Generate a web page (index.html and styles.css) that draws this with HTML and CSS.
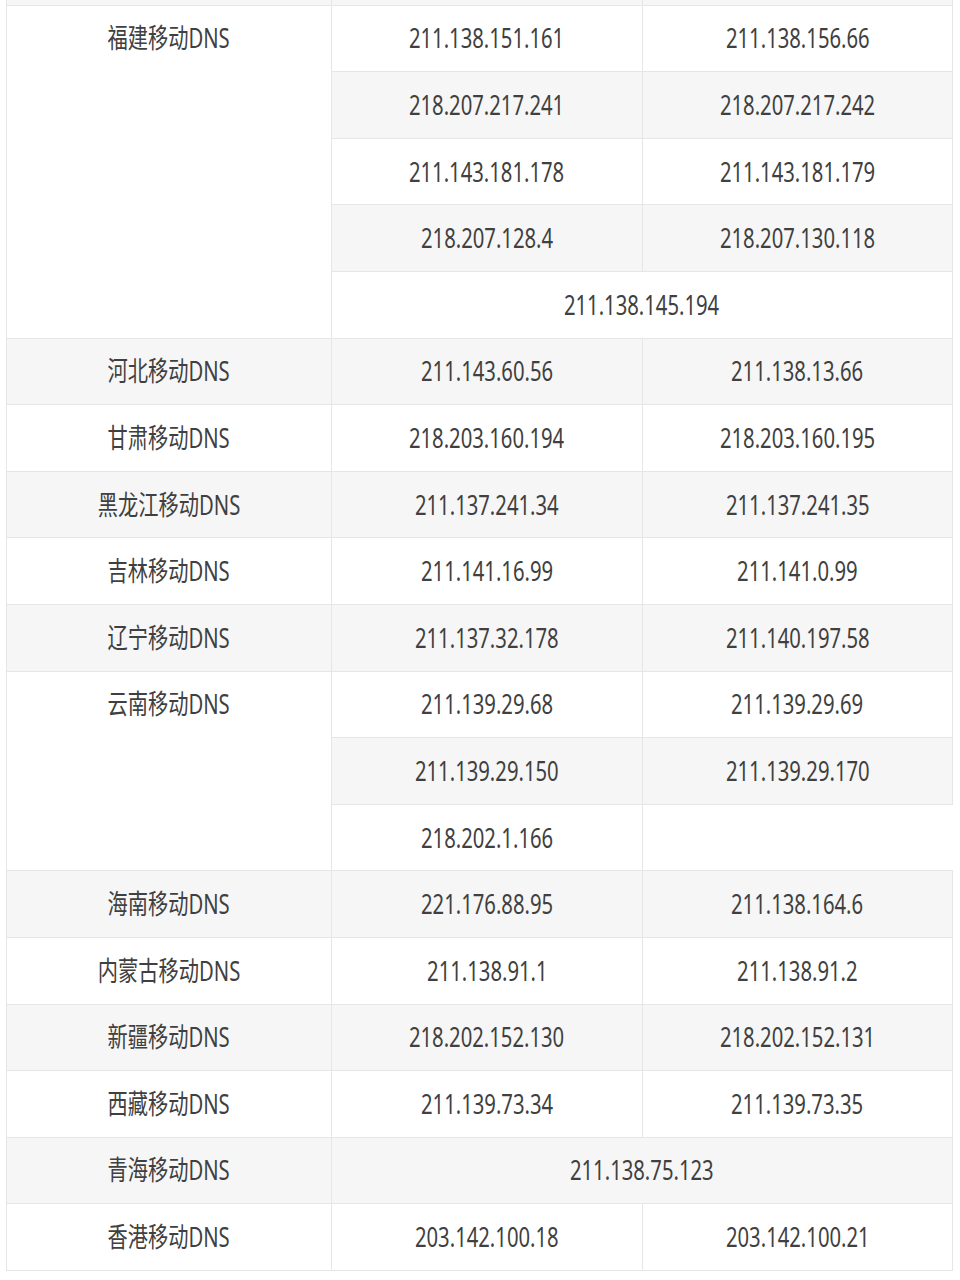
FILE: index.html
```html
<!DOCTYPE html>
<html lang="zh-CN">
<head>
<meta charset="utf-8">
<title>移动DNS</title>
<link rel="stylesheet" href="styles.css">
</head>
<body>
<table class="dns">
  <colgroup><col class="c1"><col class="c2"><col class="c3"></colgroup>
  <tbody>
    <tr class="g"><td></td><td></td><td></td></tr>
    <tr><td rowspan="5" class="top"><span class="t">福建移动DNS</span></td><td><span class="t">211.138.151.161</span></td><td><span class="t">211.138.156.66</span></td></tr>
    <tr class="g"><td><span class="t">218.207.217.241</span></td><td><span class="t">218.207.217.242</span></td></tr>
    <tr><td><span class="t">211.143.181.178</span></td><td><span class="t">211.143.181.179</span></td></tr>
    <tr class="g"><td><span class="t">218.207.128.4</span></td><td><span class="t">218.207.130.118</span></td></tr>
    <tr><td colspan="2"><span class="t">211.138.145.194</span></td></tr>
    <tr class="g"><td><span class="t">河北移动DNS</span></td><td><span class="t">211.143.60.56</span></td><td><span class="t">211.138.13.66</span></td></tr>
    <tr><td><span class="t">甘肃移动DNS</span></td><td><span class="t">218.203.160.194</span></td><td><span class="t">218.203.160.195</span></td></tr>
    <tr class="g"><td><span class="t">黑龙江移动DNS</span></td><td><span class="t">211.137.241.34</span></td><td><span class="t">211.137.241.35</span></td></tr>
    <tr><td><span class="t">吉林移动DNS</span></td><td><span class="t">211.141.16.99</span></td><td><span class="t">211.141.0.99</span></td></tr>
    <tr class="g"><td><span class="t">辽宁移动DNS</span></td><td><span class="t">211.137.32.178</span></td><td><span class="t">211.140.197.58</span></td></tr>
    <tr><td rowspan="3" class="top"><span class="t">云南移动DNS</span></td><td><span class="t">211.139.29.68</span></td><td><span class="t">211.139.29.69</span></td></tr>
    <tr class="g"><td><span class="t">211.139.29.150</span></td><td><span class="t">211.139.29.170</span></td></tr>
    <tr><td><span class="t">218.202.1.166</span></td><td class="empty"></td></tr>
    <tr class="g"><td><span class="t">海南移动DNS</span></td><td><span class="t">221.176.88.95</span></td><td><span class="t">211.138.164.6</span></td></tr>
    <tr><td><span class="t">内蒙古移动DNS</span></td><td><span class="t">211.138.91.1</span></td><td><span class="t">211.138.91.2</span></td></tr>
    <tr class="g"><td><span class="t">新疆移动DNS</span></td><td><span class="t">218.202.152.130</span></td><td><span class="t">218.202.152.131</span></td></tr>
    <tr><td><span class="t">西藏移动DNS</span></td><td><span class="t">211.139.73.34</span></td><td><span class="t">211.139.73.35</span></td></tr>
    <tr class="g"><td><span class="t">青海移动DNS</span></td><td colspan="2"><span class="t">211.138.75.123</span></td></tr>
    <tr><td><span class="t">香港移动DNS</span></td><td><span class="t">203.142.100.18</span></td><td><span class="t">203.142.100.21</span></td></tr>
  </tbody>
</table>
</body>
</html>
```
FILE: styles.css
```css
html, body {
  margin: 0;
  padding: 0;
  background: #ffffff;
}
body {
  font-family: "Noto Sans", "Noto Sans CJK SC", sans-serif;
  color: #404040;
  overflow: hidden;
}
.dns {
  border-collapse: collapse;
  width: 946px;
  margin: -62px 0 0 6px;
  table-layout: fixed;
}
.c1 { width: 325px; }
.c2 { width: 311px; }
.c3 { width: 310px; }
.dns tr {
  height: 66.6px;
}
.dns tr.g td {
  background: #f6f6f6;
}
.dns td {
  border: 1px solid #e6e6e6;
  padding: 0;
  text-align: center;
  vertical-align: middle;
  background: #ffffff;
  white-space: nowrap;
}
.dns td.top {
  vertical-align: top;
  background: #ffffff;
  padding-top: 14px;
}
.dns td.empty {
  background: #ffffff;
  border-right-color: #ffffff;
}
.t {
  display: inline-block;
  font-size: 27px;
  line-height: 36px;
  transform: scaleX(0.75);
}
```
